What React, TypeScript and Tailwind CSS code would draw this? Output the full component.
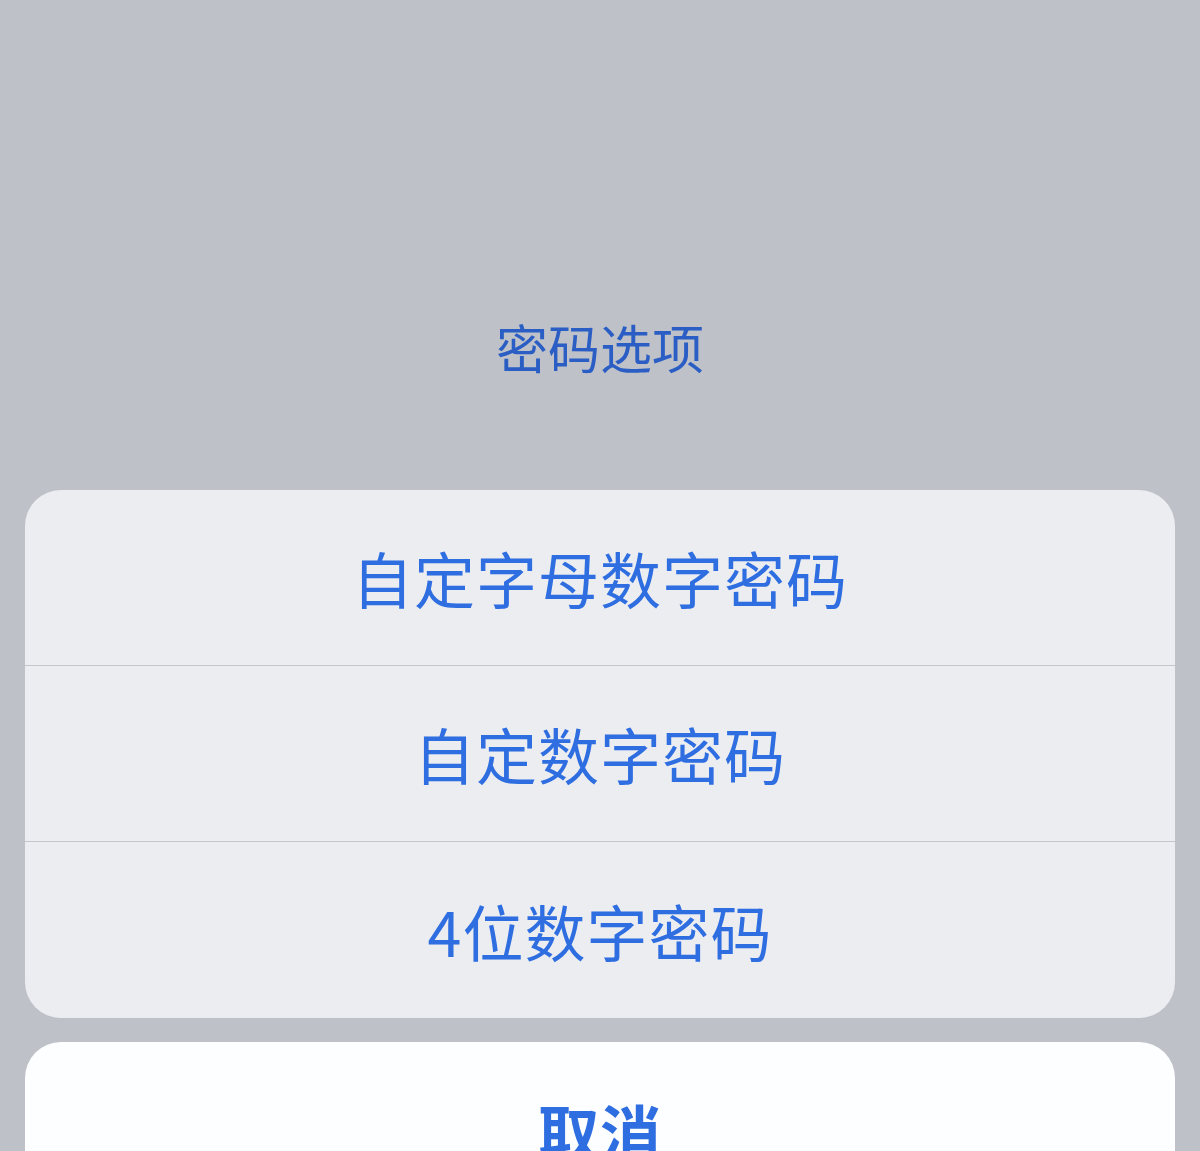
import * as React from "react";

const options = ["自定字母数字密码", "自定数字密码", "4位数字密码"];

function OptionRow({ label, last }: { label: string; last: boolean }) {
  return (
    <div
      className={
        "h-[176px] shrink-0 flex items-center justify-center " +
        (last ? "" : "border-b border-[#c5c6cb]")
      }
    >
      <span className="text-[61px] leading-none text-[#2e6ee0] tracking-[1px]">{label}</span>
    </div>
  );
}

export default function App() {
  return (
    <div
      className="h-[1151px] overflow-hidden bg-[#bfc1c9] px-[25px] flex flex-col"
      style={{ fontFamily: '"Noto Sans CJK SC", "Noto Sans", sans-serif' }}
    >
      {/* Sheet title */}
      <div className="pt-[320px] shrink-0 flex justify-center">
        <span className="text-[52px] leading-[54px] text-[#2a5ec4]">密码选项</span>
      </div>

      {/* Options group */}
      <div className="mt-[116px] shrink-0 bg-[#ecedf1] rounded-[36px] overflow-hidden">
        {options.map((o, i) => (
          <OptionRow key={o} label={o} last={i === options.length - 1} />
        ))}
      </div>

      {/* Cancel */}
      <div className="mt-[24px] h-[176px] shrink-0 bg-[#fdfeff] rounded-[36px] flex items-center justify-center">
        <span className="text-[61px] leading-none font-bold text-[#2e6ee0] tracking-[1px]">取消</span>
      </div>
    </div>
  );
}
